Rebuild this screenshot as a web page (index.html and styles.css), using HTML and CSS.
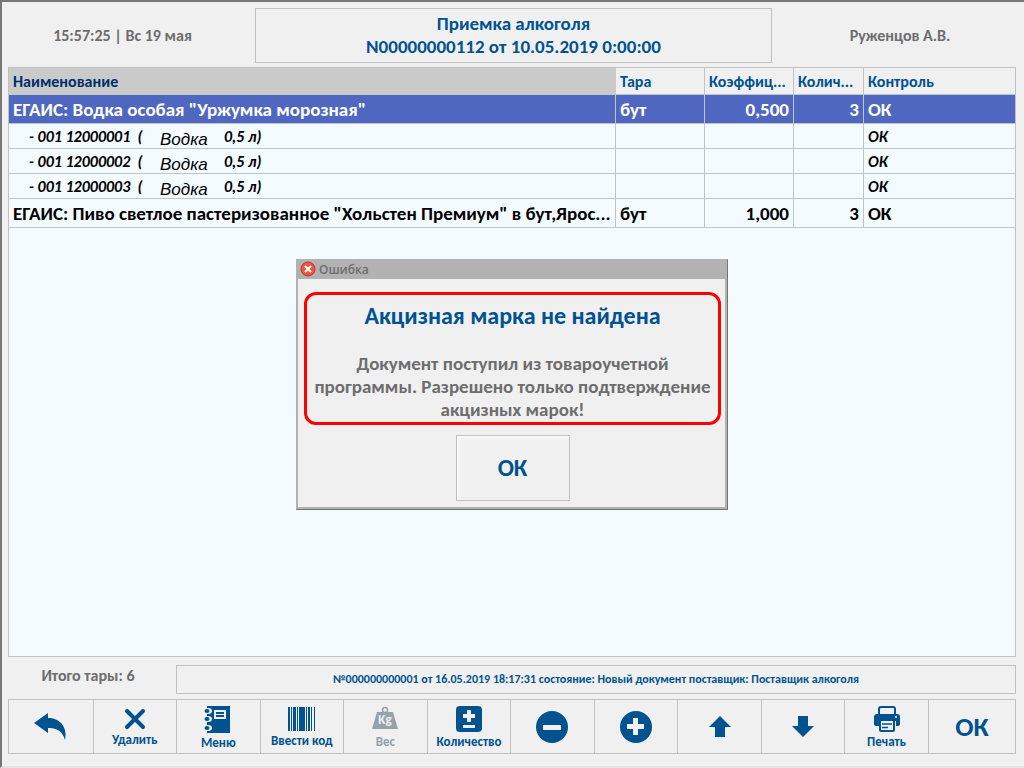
FILE: index.html
```html
<!DOCTYPE html>
<html lang="ru">
<head>
<meta charset="utf-8">
<title>Приемка алкоголя</title>
<link rel="stylesheet" href="styles.css">
</head>
<body>
<div class="app">
  <header class="top">
    <div class="clock">15:57:25 | Вс 19 мая</div>
    <h1 class="doc-title">Приемка алкоголя<br>N00000000112 от 10.05.2019 0:00:00</h1>
    <div class="user">Руженцов А.В.</div>
  </header>

  <main class="grid-area">
    <table class="goods">
      <colgroup><col><col class="col-unit"><col class="col-unit"><col class="col-qty"><col class="col-check"></colgroup>
      <thead>
        <tr><th class="sorted">Наименование</th><th>Тара</th><th>Коэффиц...</th><th>Колич...</th><th>Контроль</th></tr>
      </thead>
      <tbody>
        <tr class="item selected"><td>ЕГАИС: Водка особая "Уржумка морозная"</td><td>бут</td><td class="num">0,500</td><td class="num">3</td><td>ОК</td></tr>
        <tr class="mark"><td><div class="mark-line"><span class="code">- 001 12000001&nbsp; (</span><span class="kind">Водка</span><span>0,5 л)</span></div></td><td></td><td></td><td></td><td>ОК</td></tr>
        <tr class="mark"><td><div class="mark-line"><span class="code">- 001 12000002&nbsp; (</span><span class="kind">Водка</span><span>0,5 л)</span></div></td><td></td><td></td><td></td><td>ОК</td></tr>
        <tr class="mark"><td><div class="mark-line"><span class="code">- 001 12000003&nbsp; (</span><span class="kind">Водка</span><span>0,5 л)</span></div></td><td></td><td></td><td></td><td>ОК</td></tr>
        <tr class="item"><td>ЕГАИС: Пиво светлое пастеризованное "Хольстен Премиум" в бут,Ярос...</td><td>бут</td><td class="num">1,000</td><td class="num">3</td><td>ОК</td></tr>
      </tbody>
    </table>
  </main>

  <section class="summary">
    <div class="total">Итого тары: 6</div>
    <div class="status">№000000000001 от 16.05.2019 18:17:31 состояние: Новый документ поставщик: Поставщик алкоголя</div>
  </section>

  <nav class="toolbar">
    <button type="button" aria-label="Назад"><svg width="34" height="30" viewBox="0 0 34 30"><path d="M0 11 14 1V6C25 6 34 14 31 28 28 18 22 16 14 16V21Z"/></svg></button>
    <button type="button" class="labelled"><svg width="22" height="22" viewBox="0 0 22 22"><path class="stroke" stroke-width="4" stroke-linecap="round" d="M3 3 19 19M19 3 3 19"/></svg><span>Удалить</span></button>
    <button type="button" class="labelled"><svg width="28" height="28" viewBox="0 0 28 28"><path d="M3 1H26V28H3Z"/><path class="paper" d="M10 5H22V14H10ZM0 3H4V9H0ZM0 11H4V17H0ZM0 20H4V26H0Z"/><path class="stroke" stroke-width="2" d="M12 8H20M12 11H20"/><g class="rings"><ellipse cx="4" cy="6" rx="4" ry="3"/><ellipse cx="4" cy="14" rx="4" ry="3"/><ellipse cx="4" cy="23" rx="4" ry="3"/></g><g class="ring-cores"><ellipse cx="3" cy="6" rx="2.500" ry="2"/><ellipse cx="3" cy="14" rx="2.500" ry="2"/><ellipse cx="3" cy="23" rx="2.500" ry="2"/></g></svg><span>Меню</span></button>
    <button type="button" class="labelled"><svg width="28" height="24" viewBox="0 0 28 24"><path d="M0 0H2V24H0ZM3 0H4V24H3ZM5 0H8V24H5ZM9 0H10V24H9ZM11 0H17V24H11ZM18 0H19V24H18ZM20 0H22V24H20ZM23 0H24V24H23ZM26 0H27V24H26Z"/></svg><span>Ввести код</span></button>
    <button type="button" class="labelled" disabled><svg width="26" height="26" viewBox="0 0 26 26"><path d="M5 6H21L26 23H0Z"/><circle class="stroke" cx="13" cy="4" r="2.500" stroke-width="1.500"/><text x="13" y="18" text-anchor="middle">Kg</text></svg><span>Вес</span></button>
    <button type="button" class="labelled"><svg width="26" height="26" viewBox="0 0 26 26"><rect width="26" height="26" rx="4"/><path class="paper" d="M11 4H15V8H19V12H15V16H11V12H7V8H11ZM7 19H19V22H7Z"/></svg><span>Количество</span></button>
    <button type="button" aria-label="Минус"><svg width="32" height="32" viewBox="0 0 32 32"><circle cx="16" cy="16" r="16"/><rect class="paper" x="7" y="14" width="18" height="5"/></svg></button>
    <button type="button" aria-label="Плюс"><svg width="32" height="32" viewBox="0 0 32 32"><circle cx="16" cy="16" r="16"/><path class="paper" d="M13 7H18V13H24V18H18V24H13V18H7V13H13Z"/></svg></button>
    <button type="button" aria-label="Вверх"><svg width="22" height="22" viewBox="0 0 22 22"><path d="M11 0 22 11H16V21H6V11H0Z"/></svg></button>
    <button type="button" aria-label="Вниз"><svg width="22" height="22" viewBox="0 0 22 22"><path d="M11 21 22 10H16V0H6V10H0Z"/></svg></button>
    <button type="button" class="labelled"><svg width="26" height="26" viewBox="0 0 26 26"><path class="stroke" stroke-width="2" d="M5 9V3Q5 1 7 1H19Q21 1 21 3V9"/><path d="M3 8H23Q26 8 26 11V18Q26 20 23 20H22V15H5V20H3Q0 20 0 18V11Q0 8 3 8Z"/><circle class="paper" cx="22" cy="11" r="1"/><rect class="sheet" x="6" y="14" width="14" height="11" rx="1" stroke-width="2"/><path class="stroke" stroke-width="1.500" d="M8 18H18M8 21.500H14"/></svg><span>Печать</span></button>
    <button type="button" class="confirm">ОК</button>
  </nav>
</div>

<div class="overlay">
  <div class="dialog" role="alertdialog" aria-labelledby="error-title">
    <div class="dialog-bar"><svg width="16" height="16" viewBox="0 0 16 16"><circle class="error-disc" cx="8" cy="8" r="7"/><path class="error-cross" d="M5 5 11 11M11 5 5 11"/></svg>Ошибка</div>
    <div class="dialog-body">
      <div class="message">
        <h2 id="error-title">Акцизная марка не найдена</h2>
        <p>Документ поступил из товароучетной<br>программы. Разрешено только подтверждение<br>акцизных марок!</p>
      </div>
      <button type="button" class="accept">ОК</button>
    </div>
  </div>
</div>
</body>
</html>
```
FILE: styles.css
```css
* { box-sizing: border-box; }

body {
  margin: 0;
  background: #f0f0f0;
  color: #6d6d6d;
  font: bold 16px/20px Carlito, Lato, "Open Sans", sans-serif;
}

h1, h2, p { margin: 0; }

button {
  font: inherit;
  color: #00538f;
  background: none;
  border: 0;
  padding: 0;
}

.app {
  display: flex;
  flex-direction: column;
  height: 100vh;
  padding: 6px 8px 12px 6px;
  border: 2px solid #696969;
  border-color: #777 #e3e3e3 #e3e3e3 #777;
  border-width: 2px 0 2px 2px;
}

.top {
  display: grid;
  grid-template-columns: 247fr 517fr 244fr;
  align-items: center;
  text-align: center;
}

.clock { padding-right: 18px; }
.user { padding-left: 12px; }

.doc-title {
  border: 1px solid #c0c0c0;
  padding: 3px 0 4px;
  color: #00538f;
  font-size: 19px;
  line-height: 23px;
}

.grid-area {
  flex: 1;
  min-height: 0;
  margin-top: 4px;
  background: #f3fbff;
  border: 1px solid #c0c0c0;
}

.goods {
  width: 100%;
  table-layout: fixed;
  border-collapse: separate;
  border-spacing: 0;
  color: #000;
}

.col-unit { width: 89px; }
.col-qty { width: 70px; }
.col-check { width: 151px; }

.goods th, .goods td {
  padding: 2px 4px 0;
  border-right: 1px solid #c0c4c8;
  border-bottom: 1px solid #c0c4c8;
  overflow: hidden;
  white-space: nowrap;
  text-align: left;
}

.goods td:first-child { padding-right: 0; }
.goods th:last-child, .goods td:last-child { border-right: 0; }

.goods th {
  height: 27px;
  background: #f0f0f0;
  color: #00538f;
}

.goods th.sorted {
  background: #cacaca;
  border-color: #cacaca;
  color: #002f6c;
}

.item td { height: 29px; font-size: 19px; }
.mark td { height: 25px; font-style: italic; }
.selected td { background: #5067c1; color: #fff; }
.goods .num { text-align: right; }

.mark-line { display: flex; padding-left: 16px; }
.code { width: 131px; }

.kind {
  width: 64px;
  height: 20px;
  padding-top: 3px;
  font: italic 17px/20px "Liberation Sans", sans-serif;
}

.summary {
  display: grid;
  grid-template-columns: 1fr 5fr;
  margin: 8px 0 5px;
  text-align: center;
}

.total { padding: 1px 8px 0 0; }

.status {
  border: 1px solid #c0c0c0;
  color: #00538f;
  font-size: 12px;
  line-height: 27px;
}

.toolbar {
  display: grid;
  grid-template-columns: repeat(11, 23fr) 24fr;
  height: 55px;
  border: 1px solid #c0c0c0;
}

.toolbar button {
  display: flex;
  flex-direction: column;
  align-items: center;
  justify-content: center;
  gap: 2px;
  font-size: 13px;
  line-height: 15px;
}

.toolbar .labelled { padding-top: 2px; }
.toolbar button + button { border-left: 1px solid #c0c0c0; }
.toolbar button:disabled { color: #95a2ac; }
.toolbar .confirm { font-size: 27px; }

.toolbar svg { fill: currentColor; }
.toolbar .stroke { fill: none; stroke: currentColor; }
.toolbar .paper, .toolbar .rings { fill: #f0f0f0; }
.toolbar .ring-cores { fill: #00538f; }
.toolbar .sheet { fill: #f0f0f0; stroke: currentColor; }
.toolbar svg text { fill: #f0f0f0; font-size: 13px; }

.overlay {
  position: absolute;
  inset: 0;
  display: flex;
  align-items: center;
  justify-content: center;
}

.dialog {
  width: 432px;
  background: #f0f0f0;
  border: 1px solid #747474;
  border-color: #b2b2b2 #747474 #747474 #b2b2b2;
}

.dialog-bar {
  display: flex;
  align-items: center;
  gap: 3px;
  height: 19px;
  padding-left: 3px;
  background: #b2b2b2;
  font: 600 12px/19px "Open Sans", sans-serif;
}

.error-disc { fill: #ee5544; stroke: #c03028; }
.error-cross { fill: none; stroke: #fff; stroke-width: 2; }

.dialog-body {
  display: flex;
  flex-direction: column;
  align-items: center;
  gap: 10px;
  padding: 13px 4px 6px 6px;
  border: 2px solid #b2b2b2;
  border-width: 0 2px 2px 1px;
}

.message {
  width: 100%;
  border: 3px solid #f00;
  border-radius: 12px;
  padding: 5px 0 1px;
  text-align: center;
  font-size: 19px;
  line-height: 23px;
}

.message h2 {
  margin-bottom: 20px;
  color: #00538f;
  font-size: 24px;
  line-height: 32px;
}

.accept {
  width: 114px;
  height: 66px;
  border: 1px solid #c0c0c0;
  box-shadow: inset 2px 2px 3px #fafafa;
  font-size: 24px;
}
```
